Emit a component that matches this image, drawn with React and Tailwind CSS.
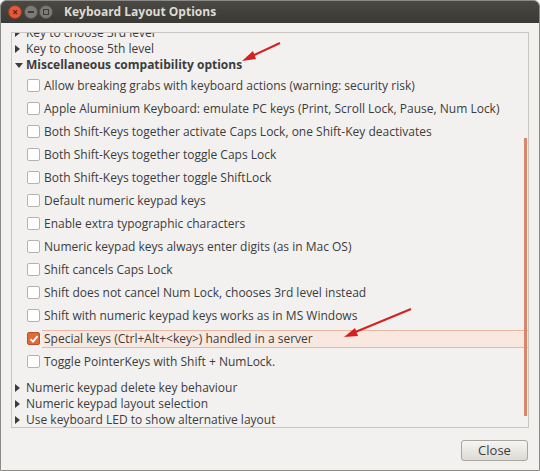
import React from 'react';

const font = { fontFamily: '"Open Sans", "Noto Sans", sans-serif' };

const Expander = ({ open, label, bold }) => (
  <div className="flex items-center h-4 pl-[3px]">
    {open ? (
      <span className="w-0 h-0 border-l-[4px] border-r-[4px] border-t-[5px] border-l-transparent border-r-transparent border-t-[#3c3c3c] mr-[3px] mt-[1px]" />
    ) : (
      <span className="w-0 h-0 border-t-[4px] border-b-[4px] border-l-[5px] border-t-transparent border-b-transparent border-l-[#3c3c3c] mr-[6px]" />
    )}
    <span className={bold ? 'font-bold' : ''}>{label}</span>
  </div>
);

const Check = ({ label, checked }) => (
  <div className="flex items-center h-[23px] pl-[15px]">
    {checked ? (
      <span className="w-[13px] h-[13px] rounded-[2px] bg-[#e06a3a] border border-[#b9522a] flex items-center justify-center">
        <svg width="10" height="10" viewBox="0 0 10 10">
          <path d="M1.5 5.2 L4 7.6 L8.6 2.2" stroke="#fff" strokeWidth="1.8" fill="none" />
        </svg>
      </span>
    ) : (
      <span className="w-[13px] h-[13px] rounded-[2px] bg-white border border-[#b5b3ae]" />
    )}
    <span
      className={
        checked
          ? 'ml-[2px] pl-[2px] flex-1 h-[18px] flex items-center bg-[#f8e8df] border-y border-[#e9b8a2]'
          : 'ml-[4px]'
      }
    >
      {label}
    </span>
  </div>
);

const options = [
  'Allow breaking grabs with keyboard actions (warning: security risk)',
  'Apple Aluminium Keyboard: emulate PC keys (Print, Scroll Lock, Pause, Num Lock)',
  'Both Shift-Keys together activate Caps Lock, one Shift-Key deactivates',
  'Both Shift-Keys together toggle Caps Lock',
  'Both Shift-Keys together toggle ShiftLock',
  'Default numeric keypad keys',
  'Enable extra typographic characters',
  'Numeric keypad keys always enter digits (as in Mac OS)',
  'Shift cancels Caps Lock',
  'Shift does not cancel Num Lock, chooses 3rd level instead',
  'Shift with numeric keypad keys works as in MS Windows',
];

export default function App() {
  return (
    <div className="w-[540px] h-[471px] bg-white relative" style={font}>
      <div className="absolute inset-0 rounded-t-[6px] border border-[#8c8a86] bg-[#f2f1f0] flex flex-col overflow-hidden">
        <div className="h-[22px] bg-gradient-to-b from-[#4a4944] to-[#3a3935] flex items-center pl-[7px] shrink-0">
          <span className="w-[14px] h-[14px] rounded-full bg-[#e25a3a] border border-[#9c3b23] flex items-center justify-center text-[#5a1a0c] text-[10px] leading-none font-bold">
            ×
          </span>
          <span className="w-[14px] h-[14px] rounded-full bg-[#7d7b76] border border-[#55534f] ml-[2px] flex items-center justify-center">
            <span className="w-[6px] h-[2px] bg-[#3c3b37]" />
          </span>
          <span className="w-[14px] h-[14px] rounded-full bg-[#7d7b76] border border-[#55534f] ml-[1px] flex items-center justify-center">
            <span className="w-[6px] h-[6px] border border-[#3c3b37]" />
          </span>
          <span className="ml-[11px] text-[#dfdbd2] text-[12px] font-bold">Keyboard Layout Options</span>
        </div>

        <div className="relative mt-[9px] ml-[10px] mr-[10px] h-[396px] border border-[#c9c7c3] bg-[#f2f1f0] overflow-hidden text-[12px] text-[#3c3c3c]">
          <div className="-mt-[8px]">
            <Expander label="Key to choose 3rd level" />
            <Expander label="Key to choose 5th level" />
            <Expander open bold label="Miscellaneous compatibility options" />
            <div className="pt-[1px]">
              {options.map((o) => (
                <Check key={o} label={o} />
              ))}
              <Check checked label="Special keys (Ctrl+Alt+<key>) handled in a server" />
              <Check label="Toggle PointerKeys with Shift + NumLock." />
            </div>
            <div className="pt-[7px]">
              <Expander label="Numeric keypad delete key behaviour" />
              <Expander label="Numeric keypad layout selection" />
              <Expander label="Use keyboard LED to show alternative layout" />
            </div>
          </div>
          <div className="absolute right-[1px] top-[105px] w-[3px] h-[278px] bg-[#d9866a]" />
        </div>

        <div className="flex justify-end pr-[11px] pt-[12px]">
          <button className="w-[67px] h-[21px] rounded-[3px] border border-[#a9a6a0] bg-gradient-to-b from-[#f7f6f5] to-[#dcdad5] text-[13px] text-[#3c3c3c]">
            Close
          </button>
        </div>
      </div>

      <svg className="absolute left-0 top-0 pointer-events-none" width="540" height="471">
        <line x1="280" y1="43" x2="250" y2="57" stroke="#d42020" strokeWidth="2" />
        <polygon points="242,61 253,51 256,59" fill="#d42020" />
        <line x1="411" y1="309" x2="353" y2="333" stroke="#d42020" strokeWidth="2" />
        <polygon points="344,337 355,328 358,336" fill="#d42020" />
      </svg>
    </div>
  );
}
